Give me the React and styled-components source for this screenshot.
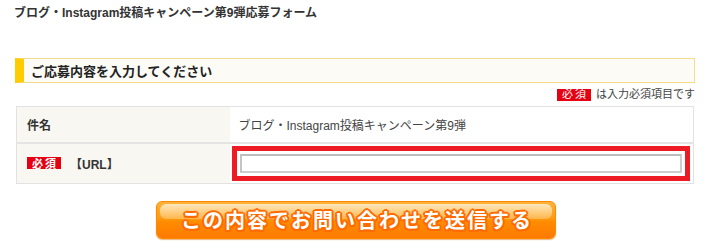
import React from 'react';
import styled, { createGlobalStyle } from 'styled-components';

const GlobalStyle = createGlobalStyle`
  body {
    margin: 0;
    background: #fff;
    font-family: "Liberation Sans", "Noto Sans CJK JP", sans-serif;
    color: #333;
  }
`;

const Page = styled.div`
  width: 715px;
  height: 249px;
  padding: 4px 20px 0 14px;
  box-sizing: border-box;
  overflow: hidden;
`;

const Title = styled.h1`
  margin: 0;
  font-size: 12px;
  line-height: 18px;
  font-weight: bold;
  color: #333;
`;

const SectionHeading = styled.h2`
  margin: 36px 0 0 1px;
  width: 680px;
  box-sizing: border-box;
  height: 25px;
  display: flex;
  align-items: center;
  background: #fcfbf5;
  border: 1px solid #f3dc8c;
  border-left: 9px solid #ffcc00;
  padding-left: 7px;
  font-size: 13px;
  font-weight: bold;
  color: #222;
`;

const Note = styled.div`
  margin-top: 5px;
  width: 681px;
  display: flex;
  justify-content: flex-end;
  align-items: center;
  gap: 5px;
  font-size: 11px;
  line-height: 13px;
  color: #444;
`;

const Badge = styled.span`
  display: inline-flex;
  align-items: center;
  justify-content: center;
  width: 34px;
  height: 12px;
  background: #e50012;
  color: #fff;
  font-size: 11px;
  letter-spacing: 2px;
  padding-left: 2px;
  box-sizing: border-box;
`;

const Table = styled.table`
  margin: 5px 0 0 2px;
  width: 678px;
  border-collapse: collapse;
  border: 1px solid #e2e2e2;
  font-size: 12px;
`;

const Row = styled.tr`
  height: ${({ $h }) => $h}px;
  border-bottom: 2px solid #e4e4e4;
  &:last-child {
    border-bottom: none;
  }
`;

const Label = styled.th`
  width: 213px;
  padding: 0 0 0 10px;
  box-sizing: border-box;
  background: #f8f7f2;
  text-align: left;
  font-weight: bold;
  color: #333;
`;

const LabelInner = styled.div`
  display: flex;
  align-items: center;
  gap: 9px;
`;

const Value = styled.td`
  padding: ${({ $field }) => ($field ? '2px 3px 2px 2px' : '0 0 0 9px')};
  background: #fff;
  color: #444;
`;

const Highlight = styled.div`
  border: 5px solid #ed1c24;
  padding: 3px;
  background: #fff;
`;

const Input = styled.input`
  display: block;
  width: 100%;
  height: 19px;
  box-sizing: border-box;
  border: 2px solid #cdcdcd;
  border-top-color: #bdbdbd;
  border-left-color: #c4c4c4;
  background: #fff;
  margin: 0;
  padding: 0 4px;
  outline: none;
`;

const ButtonRow = styled.div`
  margin-top: 17px;
  padding-left: 142px;
`;

const SubmitButton = styled.button`
  position: relative;
  width: 400px;
  height: 38px;
  border: 1px solid #ff8a00;
  border-radius: 6px;
  background: linear-gradient(#ffb23a 0%, #ff9a12 45%, #ff8c00 55%, #ff7a00 100%);
  box-shadow: 0 1px 1px rgba(220, 110, 0, 0.5);
  cursor: pointer;
  padding: 0;
  overflow: hidden;
`;

const Gloss = styled.span`
  position: absolute;
  left: 3px;
  right: 3px;
  top: 2px;
  height: 15px;
  border-radius: 6px;
  background: linear-gradient(rgba(255, 240, 210, 0.85), rgba(255, 205, 120, 0.55));
`;

const ButtonText = styled.span`
  position: relative;
  display: block;
  white-space: nowrap;
  text-align: center;
  line-height: 36px;
  font-family: "Noto Sans CJK JP", sans-serif;
  font-size: 20px;
  font-weight: bold;
  letter-spacing: 2px;
  padding-left: 2px;
  color: #fff;
  text-shadow:
    2px 0 0 #ff6a00, -2px 0 0 #ff6a00, 0 2px 0 #ff6a00, 0 -2px 0 #ff6a00,
    1.5px 1.5px 0 #ff6a00, -1.5px -1.5px 0 #ff6a00, 1.5px -1.5px 0 #ff6a00,
    -1.5px 1.5px 0 #ff6a00;
`;

export default function App() {
  return (
    <>
      <GlobalStyle />
      <Page>
        <Title>ブログ・Instagram投稿キャンペーン第9弾応募フォーム</Title>
        <SectionHeading>ご応募内容を入力してください</SectionHeading>
        <Note>
          <Badge>必須</Badge>
          <span>は入力必須項目です</span>
        </Note>
        <Table>
          <tbody>
            <Row $h={36}>
              <Label>件名</Label>
              <Value>ブログ・Instagram投稿キャンペーン第9弾</Value>
            </Row>
            <Row $h={39}>
              <Label>
                <LabelInner>
                  <Badge>必須</Badge>
                  <span>【URL】</span>
                </LabelInner>
              </Label>
              <Value $field>
                <Highlight>
                  <Input type="text" />
                </Highlight>
              </Value>
            </Row>
          </tbody>
        </Table>
        <ButtonRow>
          <SubmitButton type="button">
            <Gloss />
            <ButtonText>この内容でお問い合わせを送信する</ButtonText>
          </SubmitButton>
        </ButtonRow>
      </Page>
    </>
  );
}
